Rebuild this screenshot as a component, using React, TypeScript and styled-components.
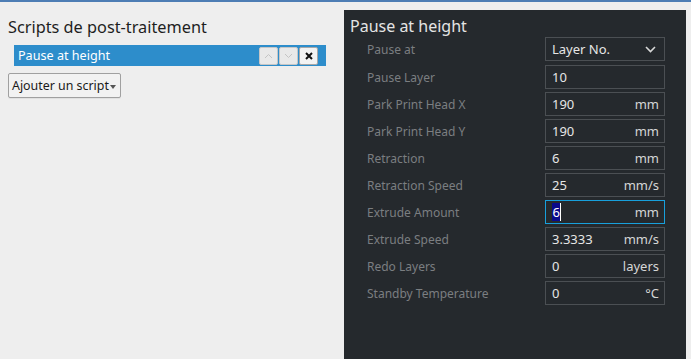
import React from "react";
import styled, { createGlobalStyle } from "styled-components";

const Global = createGlobalStyle`
  html, body { margin: 0; padding: 0; background: #eeeeee; }
  body { font-family: "Noto Sans", "Open Sans", sans-serif; overflow: hidden; }
  * { box-sizing: border-box; }
`;

const Page = styled.div`
  width: 691px;
  height: 359px;
  display: flex;
  flex-direction: column;
`;

const TopStrip = styled.div`
  height: 2px;
  background: #4d7db4;
  flex: none;
`;

const Body = styled.div`
  flex: 1;
  display: flex;
`;

const LeftCol = styled.div`
  width: 344px;
  padding: 14px 0 0 8px;
  display: flex;
  flex-direction: column;
  align-items: flex-start;
`;

const Title = styled.div<{ $dark?: boolean }>`
  font-size: ${(p) => (p.$dark ? "16px" : "16.3px")};
  line-height: ${(p) => (p.$dark ? "21px" : "22px")};
  color: ${(p) => (p.$dark ? "#e4e4e4" : "#1e1e1e")};
`;

const ScriptRow = styled.div`
  margin: 7px 0 0 6px;
  width: 312px;
  height: 21px;
  background: #2d8dcb;
  display: flex;
  align-items: center;
  padding: 0 8px 0 4px;
`;

const ScriptName = styled.span`
  flex: 1;
  color: #ffffff;
  font-size: 12.6px;
`;

const RowButtons = styled.div`
  display: flex;
  gap: 1px;
`;

const SmallBtn = styled.div<{ $disabled?: boolean }>`
  width: 19px;
  height: 18px;
  border: 1px solid ${(p) => (p.$disabled ? "#c6c6c6" : "#a8a8a8")};
  border-radius: 2px;
  background: ${(p) => (p.$disabled ? "#e9e9e9" : "#f3f3f3")};
  display: flex;
  align-items: center;
  justify-content: center;
`;

const AddButton = styled.div`
  margin-top: 7px;
  height: 25px;
  padding: 0 4px 0 3px;
  border: 1px solid #a0a0a0;
  border-radius: 2px;
  background: #f2f2f2;
  display: flex;
  align-items: center;
  gap: 1px;
  font-size: 12.4px;
  color: #1a1a1a;
  box-shadow: 0 1px 0 rgba(0,0,0,0.05);
`;

const Caret = styled.span`
  width: 0;
  height: 0;
  border-left: 3.5px solid transparent;
  border-right: 3.5px solid transparent;
  border-top: 4px solid #555;
  margin-top: 2px;
`;

const Panel = styled.div`
  margin-top: 8px;
  width: 342px;
  background: #25292d;
  padding: 6px 0 0 6px;
  display: flex;
  flex-direction: column;
`;

const FieldList = styled.div`
  display: flex;
  flex-direction: column;
  gap: 3px;
`;

const Row = styled.div<{ $first?: boolean }>`
  display: flex;
  align-items: center;
  height: 24px;
  margin-bottom: ${(p) => (p.$first ? "1px" : "0")};
`;

const Label = styled.div`
  width: 195px;
  padding-left: 17px;
  font-size: 12px;
  color: #7b7e81;
`;

const Field = styled.div<{ $focus?: boolean }>`
  width: 120px;
  height: 24px;
  border: 1px solid ${(p) => (p.$focus ? "#18a0dc" : "#4b4f53")};
  display: flex;
  align-items: center;
  padding: 0 5px 0 6px;
  font-size: 13px;
  color: #e6e6e6;
`;

const Value = styled.span`
  flex: 1;
`;

const Selected = styled.span`
  background: #0a0a8c;
  color: #ffffff;
  padding: 0 0.5px;
  border-right: 1px solid #ffffff;
`;

const Unit = styled.span`
  color: #d6d6d6;
`;

const rows: { label: string; value: string; unit?: string; focus?: boolean }[] = [
  { label: "Pause Layer", value: "10" },
  { label: "Park Print Head X", value: "190", unit: "mm" },
  { label: "Park Print Head Y", value: "190", unit: "mm" },
  { label: "Retraction", value: "6", unit: "mm" },
  { label: "Retraction Speed", value: "25", unit: "mm/s" },
  { label: "Extrude Amount", value: "6", unit: "mm", focus: true },
  { label: "Extrude Speed", value: "3.3333", unit: "mm/s" },
  { label: "Redo Layers", value: "0", unit: "layers" },
  { label: "Standby Temperature", value: "0", unit: "°C" },
];

export default function App() {
  return (
    <>
      <Global />
      <Page>
        <TopStrip />
        <Body>
          <LeftCol>
            <Title>Scripts de post-traitement</Title>
            <ScriptRow>
              <ScriptName>Pause at height</ScriptName>
              <RowButtons>
                <SmallBtn $disabled>
                  <svg width="9" height="6" viewBox="0 0 9 6">
                    <path d="M1 5 L4.5 1.5 L8 5" fill="none" stroke="#c4c4c4" strokeWidth="1" />
                  </svg>
                </SmallBtn>
                <SmallBtn $disabled>
                  <svg width="9" height="6" viewBox="0 0 9 6">
                    <path d="M1 1 L4.5 4.5 L8 1" fill="none" stroke="#c4c4c4" strokeWidth="1" />
                  </svg>
                </SmallBtn>
                <SmallBtn>
                  <svg width="8" height="8" viewBox="0 0 8 8">
                    <path d="M1 1 L7 7 M7 1 L1 7" fill="none" stroke="#111" strokeWidth="2" />
                  </svg>
                </SmallBtn>
              </RowButtons>
            </ScriptRow>
            <AddButton>
              Ajouter un script
              <Caret />
            </AddButton>
          </LeftCol>
          <Panel>
            <Title $dark>Pause at height</Title>
            <FieldList>
              <Row $first>
                <Label>Pause at</Label>
                <Field>
                  <Value>Layer No.</Value>
                  <svg width="11" height="7" viewBox="0 0 11 7" style={{ marginRight: 3 }}>
                    <path d="M1 1 L5.5 5.5 L10 1" fill="none" stroke="#d8d8d8" strokeWidth="1.6" />
                  </svg>
                </Field>
              </Row>
              {rows.map((r) => (
                <Row key={r.label}>
                  <Label>{r.label}</Label>
                  <Field $focus={r.focus}>
                    <Value>{r.focus ? <Selected>{r.value}</Selected> : r.value}</Value>
                    {r.unit && <Unit>{r.unit}</Unit>}
                  </Field>
                </Row>
              ))}
            </FieldList>
          </Panel>
        </Body>
      </Page>
    </>
  );
}
